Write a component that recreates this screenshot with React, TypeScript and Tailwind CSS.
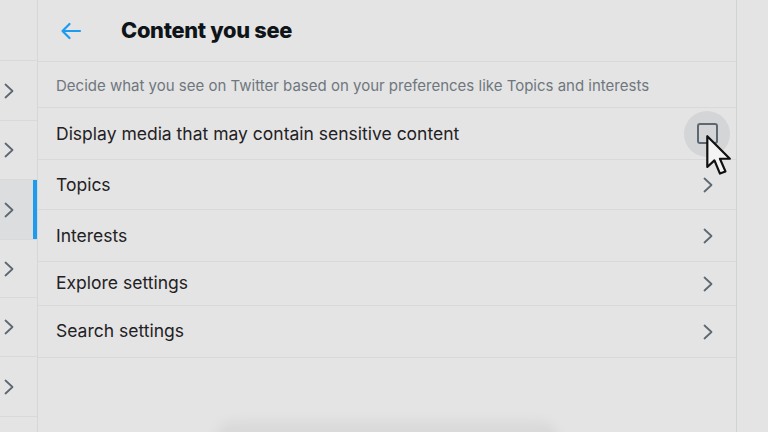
import React from "react"

function Chevron({ className = "" }: { className?: string }) {
  return (
    <svg width="10" height="16" viewBox="0 0 10 16" className={className} fill="none">
      <path d="M1.5 1.5 L8.5 8 L1.5 14.5" stroke="#5d6872" strokeWidth="1.8" strokeLinecap="round" strokeLinejoin="round" />
    </svg>
  )
}

function Cursor() {
  return (
    <svg width="33" height="44" viewBox="0 0 30 40" className="absolute left-[704px] top-[134px]">
      <path
        d="M3 2 L3 30 L9.5 24 L14.5 36 L19.5 34 L14.5 22.5 L23.5 22.5 Z"
        fill="#f4f4f4"
        stroke="#111"
        strokeWidth="2"
        strokeLinejoin="round"
      />
    </svg>
  )
}

const sideRows = [
  { h: "h-[60px]", active: false },
  { h: "h-[59px]", active: false },
  { h: "h-[60px]", active: true },
  { h: "h-[58px]", active: false },
  { h: "h-[59px]", active: false },
  { h: "h-[60px]", active: false },
]

const links = [
  { label: "Topics", h: "h-[50px]", pad: "pt-[2px]" },
  { label: "Interests", h: "h-[52px]", pad: "pt-[2px]" },
  { label: "Explore settings", h: "h-[44px]", pad: "pt-0" },
  { label: "Search settings", h: "h-[52px]", pad: "pt-0" },
]

export default function App() {
  return (
    <div className="relative w-[768px] h-[432px] overflow-hidden bg-[#e4e4e4] flex font-['Inter',sans-serif] text-[#1f2124]">
      {/* left settings list, cut off */}
      <div className="w-[38px] shrink-0 border-r border-[#d6d7d8] flex flex-col">
        <div className="h-[61px] border-b border-[#d8d9da]" />
        {sideRows.map((r, i) => (
          <div
            key={i}
            className={`${r.h} relative flex items-center pl-[4px] border-b border-[#d8d9da] ${r.active ? "bg-[#dcdddf]" : ""}`}
          >
            <Chevron />
            {r.active && <div className="absolute right-0 top-0 bottom-0 w-[4px] bg-[#1d9bf0]" />}
          </div>
        ))}
      </div>

      {/* main panel */}
      <div className="w-[699px] shrink-0 border-r border-[#cfd1d3] flex flex-col">
        <div className="h-[62px] border-b border-[#d8d9da] flex items-center pl-[22px]">
          <svg width="22" height="18" viewBox="0 0 22 18" fill="none">
            <path d="M20 9 H2.5 M9.5 2 L2.5 9 L9.5 16" stroke="#1d9bf0" strokeWidth="2.2" strokeLinecap="round" strokeLinejoin="round" />
          </svg>
          <h1 className="ml-[39px] text-[21.8px] font-extrabold tracking-[-0.3px] text-[#0f1419]">Content you see</h1>
        </div>

        <div className="h-[46px] border-b border-[#d8d9da] flex items-center px-[18px] pt-[4px]">
          <p className="text-[15px] text-[#6f777e]">
            Decide what you see on Twitter based on your preferences like Topics and interests
          </p>
        </div>

        <div className="h-[52px] border-b border-[#d8d9da] flex items-center justify-between px-[18px]">
          <span className="text-[17.5px] pt-[2px]">Display media that may contain sensitive content</span>
          <div className="w-[46px] h-[46px] mr-[-12px] rounded-full bg-[#d4d5d7] flex items-center justify-center">
            <div className="w-[21px] h-[21px] rounded-[3px] border-2 border-[#5d6872]" />
          </div>
        </div>

        {links.map((l) => (
          <div key={l.label} className={`${l.h} border-b border-[#d8d9da] flex items-center justify-between pl-[18px] pr-[23px]`}>
            <span className={`text-[17.5px] ${l.pad}`}>{l.label}</span>
            <Chevron />
          </div>
        ))}
      </div>

      <div className="flex-1" />

      {/* soft shadow from a sheet peeking in at the bottom */}
      <div className="absolute left-[222px] top-[428px] w-[330px] h-[30px] rounded-[10px] bg-[#dadada] shadow-[0_0_14px_6px_rgba(0,0,0,0.05)]" />

      <Cursor />
    </div>
  )
}
